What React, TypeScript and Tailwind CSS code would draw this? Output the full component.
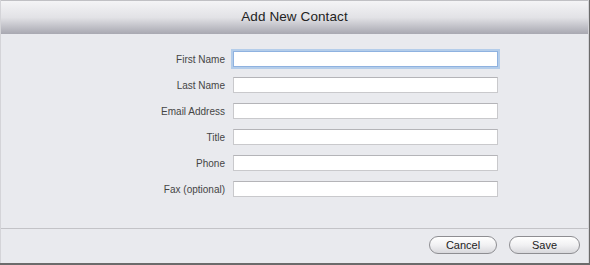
import React from "react";

const fields = ["First Name", "Last Name", "Email Address", "Title", "Phone", "Fax (optional)"];

export default function App() {
  return (
    <div className="w-[590px] h-[265px] overflow-hidden bg-[#6b6b6b]" style={{ fontFamily: '"Liberation Sans", Arial, sans-serif' }}>
      <div className="w-[589px] h-[263px] bg-[#e9eaee] flex flex-col border-l border-r border-[#d4d4d8]">
        <div className="h-[34px] shrink-0 border-t border-[#c0c0c4] bg-gradient-to-b from-[#f4f4f6] via-[#e2e2e6] to-[#a8a8b1] flex items-center justify-center">
          <span className="text-[13.5px] text-[#222] tracking-[0.1px]">Add New Contact</span>
        </div>
        <div className="flex-1 flex flex-col gap-[10px] pt-[17px]">
          {fields.map((f, i) => (
            <div key={f} className="flex items-center h-[16px]">
              <div className="w-[225px] text-right text-[10px] text-[#454545] pr-[1px]">{f}</div>
              <div
                className={
                  "ml-[7px] w-[265px] h-[16px] bg-white border " +
                  (i === 0
                    ? "border-[#8fb2e0] shadow-[0_0_0_2px_#b4cdea]"
                    : "border-[#c9c9cc] border-t-[#b4b4b8]")
                }
              />
            </div>
          ))}
        </div>
        <div className="h-[35px] shrink-0 border-t border-[#c3c3c7] flex items-start justify-end pt-[7px] pr-[8px] gap-[12px]">
          <button className="w-[68px] h-[18px] rounded-full border border-[#8e8e92] bg-gradient-to-b from-[#ffffff] via-[#f1f1f3] to-[#d8d8dc] text-[11px] text-[#222] leading-none">
            Cancel
          </button>
          <button className="w-[71px] h-[18px] rounded-full border border-[#8e8e92] bg-gradient-to-b from-[#ffffff] via-[#f1f1f3] to-[#d8d8dc] text-[11px] text-[#222] leading-none">
            Save
          </button>
        </div>
      </div>
    </div>
  );
}
